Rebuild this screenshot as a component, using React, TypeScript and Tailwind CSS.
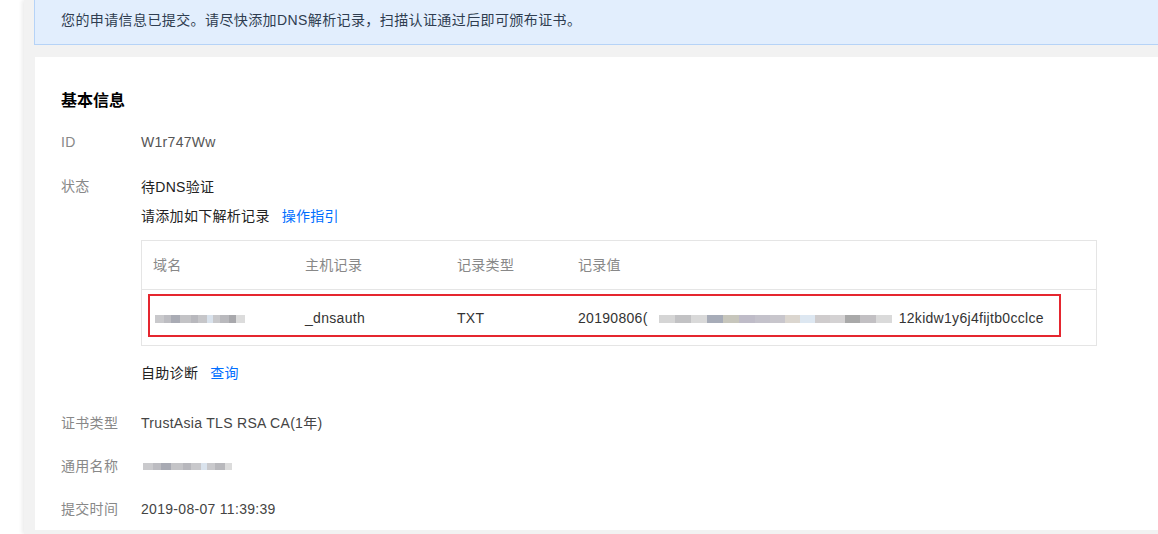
import React from "react";

const Blur = ({ blocks, h = 8 }: { blocks: [number, string][]; h?: number }) => (
  <span className="inline-flex items-center blur-[0.6px]" style={{ height: h + 6 }}>
    {blocks.map(([w, c], i) => (
      <span key={i} className="inline-block" style={{ width: w, height: h, background: c }} />
    ))}
  </span>
);

const domainBlocks: [number, string][] = [
  [9, "#c9c9cc"],
  [7, "#bdbdc2"],
  [9, "#a9abb4"],
  [11, "#c3c3c6"],
  [7, "#b8b8bd"],
  [9, "#c6c6c9"],
  [6, "#d9e2ec"],
  [7, "#c8c8cb"],
  [9, "#b9b9bd"],
  [7, "#a8a8ac"],
  [9, "#dcdcdc"],
];

const valueBlocks: [number, string][] = [
  [16, "#d5d5d5"],
  [16, "#c2c2c4"],
  [16, "#d9d9d9"],
  [16, "#a7acb8"],
  [16, "#c7c6bc"],
  [16, "#bfbcc8"],
  [15, "#c4c2cb"],
  [15, "#c8c6cc"],
  [15, "#dbd6cf"],
  [15, "#dde7f1"],
  [15, "#cfcccd"],
  [15, "#d4d2d3"],
  [15, "#a9a9a9"],
  [16, "#c2c0c3"],
  [16, "#dadada"],
];

const cnBlocks: [number, string][] = [
  [10, "#cacacd"],
  [8, "#bcbcc1"],
  [10, "#a8aab3"],
  [12, "#c4c4c7"],
  [8, "#b7b7bc"],
  [10, "#c8c8cb"],
  [6, "#dae3ed"],
  [8, "#c9c9cc"],
  [10, "#b8b8bc"],
  [7, "#dcdcdc"],
];

export default function App() {
  const cjk = { fontFamily: '"Liberation Sans", "Noto Sans CJK SC", sans-serif' };
  return (
    <div className="w-[1158px] h-[534px] overflow-hidden bg-white flex text-[14px] tracking-[0.3px]" style={cjk}>
      <div className="ml-[24px] flex-1 bg-[#f2f2f2] shadow-[-2px_0_4px_rgba(0,0,0,0.08)] pl-[10px] flex flex-col">
        <div className="h-[45px] bg-[#e2eefd] border-l border-b border-[#b6d3f7] pl-[26px] pt-[10px] leading-[20px] text-[#2f3d50] tracking-[0.4px] w-[1200px]">
          您的申请信息已提交。请尽快添加DNS解析记录，扫描认证通过后即可颁布证书。
        </div>
        <div className="mt-[12px] ml-[1px] bg-white w-[1200px] h-[473px] pl-[26px] pt-[34px] flex flex-col leading-[20px]">
          <div className="text-[16px] font-bold text-black tracking-normal">基本信息</div>
          <div className="flex mt-[21px]">
            <div className="w-[80px] text-[#888]">ID</div>
            <div className="text-[#555]">W1r747Ww</div>
          </div>
          <div className="flex mt-[24px]">
            <div className="w-[80px] text-[#888]">状态</div>
            <div className="flex flex-col">
              <div className="text-[#222] mt-[1px]">待DNS验证</div>
              <div className="mt-[9px] text-[#222]">
                请添加如下解析记录<span className="ml-[12px] text-[#006eff]">操作指引</span>
              </div>
              <div className="mt-[14px] w-[956px] border border-[#e5e5e5]">
                <div className="flex h-[49px] items-center border-b border-[#e5e5e5] text-[#888] pl-[11px]">
                  <div className="w-[152px]">域名</div>
                  <div className="w-[152px]">主机记录</div>
                  <div className="w-[121px]">记录类型</div>
                  <div>记录值</div>
                </div>
                <div className="relative flex h-[55px] items-center text-[#333] pl-[11px]">
                  <div className="w-[152px] flex items-center">
                    <span className="ml-[2px]"><Blur blocks={domainBlocks} /></span>
                  </div>
                  <div className="w-[152px]">_dnsauth</div>
                  <div className="w-[121px]">TXT</div>
                  <div className="flex items-center">
                    <span>20190806(</span>
                    <span className="ml-[11px]"><Blur blocks={valueBlocks} /></span>
                    <span className="ml-[7px]">12kidw1y6j4fijtb0cclce</span>
                  </div>
                  <div className="absolute left-[6px] top-[4px] w-[913px] h-[43px] border-2 border-[#e5262f] pointer-events-none" />
                </div>
              </div>
              <div className="mt-[17px] text-[#222]">
                自助诊断<span className="ml-[12px] text-[#006eff]">查询</span>
              </div>
            </div>
          </div>
          <div className="flex mt-[30px]">
            <div className="w-[80px] text-[#888]">证书类型</div>
            <div className="text-[#444]">TrustAsia TLS RSA CA(1年)</div>
          </div>
          <div className="flex mt-[23px]">
            <div className="w-[80px] text-[#888]">通用名称</div>
            <div className="flex items-center h-[20px] ml-[2px]">
              <Blur blocks={cnBlocks} h={7} />
            </div>
          </div>
          <div className="flex mt-[23px]">
            <div className="w-[80px] text-[#888]">提交时间</div>
            <div className="text-[#444]">2019-08-07 11:39:39</div>
          </div>
        </div>
      </div>
    </div>
  );
}
